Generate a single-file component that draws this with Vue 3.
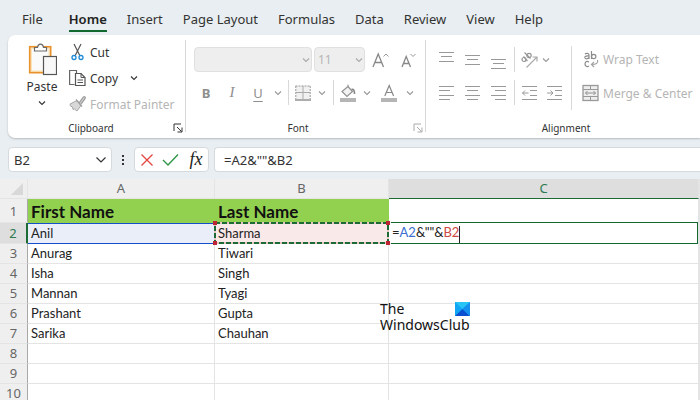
<script setup>
import { h, ref } from 'vue'

const Chevron = () =>
  h('svg', { class: 'chevron', viewBox: '0 0 8 8', width: 8, height: 8, 'aria-hidden': 'true' }, [
    h('path', { d: 'M1 2.5L4 5.5L7 2.5', fill: 'none', stroke: 'currentColor', 'stroke-width': 1.1 }),
  ])

const Launcher = () =>
  h('svg', { class: 'launcher-icon', viewBox: '0 0 10 10', width: 10, height: 10, 'aria-hidden': 'true' }, [
    h('path', { d: 'M1 8V1H8M4 4L8.5 8.5M9 4.5V9H4.5', fill: 'none', stroke: 'currentColor' }),
  ])

const tabs = ['File', 'Home', 'Insert', 'Page Layout', 'Formulas', 'Data', 'Review', 'View', 'Help']

const verticalAlign = [
  { name: 'Top align', path: 'M1 1.5H16M3 5.5H14M1 10.5H16' },
  { name: 'Middle align', path: 'M1 4.5H16M3 8.5H14M1 13.5H16' },
  { name: 'Bottom align', path: 'M1 8.5H16M3 12.5H14M1 17.5H16' },
]
const horizontalAlign = [
  { name: 'Align left', path: 'M1 2.5H16M1 6.5H12M1 11.5H16M1 15.5H12' },
  { name: 'Center', path: 'M1 2.5H16M3 6.5H14M1 11.5H16M3 15.5H14' },
  { name: 'Align right', path: 'M1 2.5H16M5 6.5H16M1 11.5H16M5 15.5H16' },
]

const formula = ref('=A2&""&B2')

const rows = [
  { n: 3, first: 'Anurag', last: 'Tiwari' },
  { n: 4, first: 'Isha', last: 'Singh' },
  { n: 5, first: 'Mannan', last: 'Tyagi' },
  { n: 6, first: 'Prashant', last: 'Gupta' },
  { n: 7, first: 'Sarika', last: 'Chauhan' },
  { n: 8, first: '', last: '' },
  { n: 9, first: '', last: '' },
  { n: 10, first: '', last: '' },
]
</script>

<template>
  <div class="app">
    <nav class="tabs" aria-label="Ribbon tabs">
      <a v-for="t in tabs" :key="t" href="#" class="tab" :class="{ active: t === 'Home', file: t === 'File' }">{{ t }}</a>
    </nav>

    <div class="ribbon">
      <section class="group clipboard">
        <div class="group-body">
          <button class="paste" type="button">
            <svg width="30" height="34" viewBox="0 0 30 34" aria-hidden="true">
              <rect x="2.7" y="4.7" width="21" height="26" fill="#fbe3b5" stroke="#e8912d" stroke-width="1.6" />
              <rect x="5" y="7" width="16.5" height="21.5" fill="#fafafa" />
              <path d="M7.5 9V5.5H10.5C11 1 16 1 16.5 5.5H19.5V9Z" fill="#fff" stroke="#6a6a6a" stroke-width="1.2" />
              <rect x="16.5" y="14.5" width="13" height="18" fill="#f8f8f8" stroke="#555" stroke-width="1.2" />
            </svg>
            <span>Paste</span>
            <Chevron />
          </button>
          <div class="commands">
            <button class="command" type="button">
              <svg width="17" height="18" viewBox="0 0 17 18" aria-hidden="true">
                <path d="M5 1L10.8 12.5M12 1L6.2 12.5" stroke="#555" stroke-width="1.2" fill="none" />
                <circle cx="5" cy="14.5" r="2" fill="none" stroke="#1e8ad6" stroke-width="1.3" />
                <circle cx="12" cy="14.5" r="2" fill="none" stroke="#1e8ad6" stroke-width="1.3" />
              </svg>
              <span>Cut</span>
            </button>
            <button class="command" type="button">
              <svg width="17" height="18" viewBox="0 0 17 18" aria-hidden="true">
                <path d="M5.5 15.5H.6V1.5H7.5V4" fill="none" stroke="#666" stroke-width="1.2" />
                <path d="M6.5 4.5H12L16 8.5V16.5H6.5Z" fill="#fff" stroke="#555" stroke-width="1.2" />
                <path d="M12 4.5V8.5H16M8.5 11H14M8.5 13.5H14" fill="none" stroke="#555" />
              </svg>
              <span>Copy</span>
              <Chevron class="spaced" />
            </button>
            <button class="command" type="button" disabled>
              <svg width="17" height="18" viewBox="0 0 17 18" aria-hidden="true">
                <path d="M1 9L8 5.5L12 10.5L8 16L5.5 14L4 14.5L3.5 12L1.5 11Z" fill="#d8d8d8" stroke="#a8a8a8" />
                <path d="M7 4.5L13 11.5M10.5 7.5L14.5 2C15.5 1 17 2.5 16 3.5L12 9" fill="#e4e4e4" stroke="#a0a0a0" stroke-width="1.3" />
              </svg>
              <span>Format Painter</span>
            </button>
          </div>
        </div>
        <h2 class="group-title">Clipboard</h2>
        <button class="launcher" type="button" aria-label="Clipboard settings"><Launcher /></button>
      </section>

      <section class="group font">
        <div class="tool-rows">
          <div class="tool-row first">
            <div class="combo family">
              <select disabled aria-label="Font"><option></option></select>
              <Chevron />
            </div>
            <div class="combo size">
              <select disabled aria-label="Font size"><option>11</option></select>
              <Chevron />
            </div>
            <button class="tool" type="button" disabled aria-label="Increase font size">
              <svg width="17" height="18" viewBox="0 0 17 18" aria-hidden="true">
                <path d="M1 16L6.2 3L11.5 16M3 11.5H9.5" fill="none" stroke="#888" stroke-width="1.3" />
                <path d="M11.5 5.5L14 3L16.5 5.5" fill="none" stroke="#999" />
              </svg>
            </button>
            <button class="tool" type="button" disabled aria-label="Decrease font size">
              <svg width="17" height="18" viewBox="0 0 17 18" aria-hidden="true">
                <path d="M2 16L6.2 5.5L10.5 16M3.5 12.5H9" fill="none" stroke="#888" stroke-width="1.3" />
                <path d="M10.5 3L13 5.5L15.5 3" fill="none" stroke="#999" />
              </svg>
            </button>
          </div>
          <div class="tool-row">
            <button class="tool letter bold" type="button" disabled>B</button>
            <button class="tool letter italic" type="button" disabled>I</button>
            <button class="tool letter underline" type="button" disabled>U</button>
            <button class="drop small" type="button" disabled aria-label="Underline options"><Chevron /></button>
            <i class="sep"></i>
            <button class="tool narrow" type="button" disabled aria-label="Borders">
              <svg width="16" height="16" viewBox="0 0 16 16" aria-hidden="true">
                <rect x="1" y="1" width="14" height="13" fill="#f1f1f1" />
                <path d="M.5 1H15.5M.8 1V14M15.2 1V14" fill="none" stroke="#999" stroke-dasharray="2 1" />
                <path d="M8 1V14M1 7.5H15" stroke="#aaa" />
                <path d="M0 15H16" stroke="#999" stroke-width="1.6" />
              </svg>
            </button>
            <button class="drop" type="button" disabled aria-label="Border options"><Chevron /></button>
            <i class="sep"></i>
            <button class="tool narrow" type="button" disabled aria-label="Fill colour">
              <svg width="18" height="18" viewBox="0 0 18 18" aria-hidden="true">
                <path d="M8.5 2L13.5 7.5L8 12.5L3 7.5L9 2.5V.8" fill="#f2f2f2" stroke="#909090" stroke-width="1.2" />
                <path d="M12.5 5.5C15 5 15.5 7 15.5 10" fill="none" stroke="#888" stroke-width="1.6" />
                <rect x="1" y="14" width="16" height="4" fill="#b5b5b5" />
              </svg>
            </button>
            <button class="drop" type="button" disabled aria-label="Fill options"><Chevron /></button>
            <button class="tool wide" type="button" disabled aria-label="Font colour">
              <svg width="18" height="18" viewBox="0 0 18 18" aria-hidden="true">
                <path d="M4.8 12L9.2 1.5L13.6 12M6.5 8.5H12" fill="none" stroke="#888" stroke-width="1.2" />
                <rect x="1" y="14" width="16" height="4" fill="#b5b5b5" />
              </svg>
            </button>
            <button class="drop small" type="button" disabled aria-label="Font colour options"><Chevron /></button>
          </div>
        </div>
        <h2 class="group-title">Font</h2>
        <button class="launcher" type="button" disabled aria-label="Font settings"><Launcher /></button>
      </section>

      <section class="group alignment">
        <div class="align-body">
          <div class="tool-rows">
            <div class="tool-row">
              <button v-for="a in verticalAlign" :key="a.name" class="tool" type="button" disabled :aria-label="a.name">
                <svg width="17" height="18" viewBox="0 0 17 18" aria-hidden="true">
                  <path :d="a.path" stroke="#999" />
                </svg>
              </button>
              <i class="sep"></i>
              <button class="tool narrow" type="button" disabled aria-label="Orientation">
                <svg width="18" height="18" viewBox="0 0 18 18" aria-hidden="true">
                  <g fill="none" stroke="#969696" stroke-width="1.2">
                    <circle cx="4" cy="8.5" r="2" />
                    <path d="M3.5 5.5L7.5 10M4.5 1.5L10.5 7.5" />
                    <circle cx="9" cy="4.5" r="2.2" />
                    <path d="M6.5 16.5L16.5 6.5M12.5 6H17V10.5" stroke="#aaa" />
                  </g>
                </svg>
              </button>
              <button class="drop slim" type="button" disabled aria-label="Orientation options"><Chevron /></button>
            </div>
            <div class="tool-row">
              <button v-for="a in horizontalAlign" :key="a.name" class="tool" type="button" disabled :aria-label="a.name">
                <svg width="17" height="18" viewBox="0 0 17 18" aria-hidden="true">
                  <path :d="a.path" stroke="#999" />
                </svg>
              </button>
              <i class="sep"></i>
              <button class="tool narrow" type="button" disabled aria-label="Decrease indent">
                <svg width="17" height="18" viewBox="0 0 17 18" aria-hidden="true">
                  <path d="M1 2.5H16M9 6.5H16M9 11.5H16M1 15.5H16M1.5 9H7.5M4 6.5L1.5 9L4 11.5" fill="none" stroke="#999" />
                </svg>
              </button>
              <button class="tool wide" type="button" disabled aria-label="Increase indent">
                <svg width="17" height="18" viewBox="0 0 17 18" aria-hidden="true">
                  <path d="M1 2.5H16M9 6.5H16M9 11.5H16M1 15.5H16M1 9H7M4.5 6.5L7 9L4.5 11.5" fill="none" stroke="#999" />
                </svg>
              </button>
            </div>
          </div>
          <div class="align-right">
            <button class="command" type="button" disabled>
              <svg width="17" height="18" viewBox="0 0 17 18" aria-hidden="true">
                <g fill="none" stroke="#8c8c8c" stroke-width="1.2">
                  <path d="M3 4C4 3 7 3 7 5V9M7 6C3 5.5 2.5 7 3 8C4 9.5 6.5 8.5 7 7.5" />
                  <path d="M9.5 1V9" />
                  <circle cx="11.7" cy="6.5" r="2.2" />
                  <path d="M7 12C4.5 10.5 3 12 3 14C3 16 5 17.5 7 16" />
                  <path d="M15.5 10C16.5 13.5 14 14.5 9.5 14.5M12 12L9.5 14.5L12 17" stroke="#a0a0a0" />
                </g>
              </svg>
              <span>Wrap Text</span>
            </button>
            <button class="command" type="button" disabled>
              <svg width="17" height="18" viewBox="0 0 17 18" aria-hidden="true">
                <rect x="1" y="1.5" width="15" height="15" fill="#eee" stroke="#999" stroke-width="1.3" />
                <path d="M1 5.5H16M1 12.5H16M8.5 2V5.5M8.5 12.5V16" stroke="#999" />
                <path d="M3.5 9H13.5M5.5 7L3.5 9L5.5 11M11.5 7L13.5 9L11.5 11" fill="none" stroke="#909090" />
              </svg>
              <span>Merge &amp; Center</span>
            </button>
          </div>
        </div>
        <h2 class="group-title">Alignment</h2>
      </section>
    </div>

    <div class="formula-bar">
      <div class="name-box">
        <select aria-label="Name box"><option>B2</option></select>
        <svg width="12" height="8" viewBox="0 0 12 8" aria-hidden="true">
          <path d="M1.5 1.5L6 6L10.5 1.5" fill="none" stroke="#333" stroke-width="1.2" />
        </svg>
      </div>
      <svg class="dots" width="4" height="12" viewBox="0 0 4 12" aria-hidden="true">
        <path d="M1 1H3V3H1ZM1 5H3V7H1ZM1 9H3V11H1Z" fill="#333" />
      </svg>
      <div class="entry">
        <button type="button" aria-label="Cancel">
          <svg width="14" height="14" viewBox="0 0 14 14"><path d="M1.5 1.5L12.5 12.5M12.5 1.5L1.5 12.5" stroke="#e5443e" stroke-width="1.3" /></svg>
        </button>
        <button type="button" aria-label="Enter">
          <svg width="17" height="14" viewBox="0 0 17 14"><path d="M1 7L6 12L16 1.5" fill="none" stroke="#2f9648" stroke-width="1.4" /></svg>
        </button>
        <button type="button" class="fx" aria-label="Insert function">fx</button>
      </div>
      <input v-model="formula" class="formula" type="text" aria-label="Formula" />
    </div>

    <div class="sheet">
      <table>
        <colgroup>
          <col class="col-n" /><col class="col-a" /><col class="col-b" /><col class="col-c" /><col />
        </colgroup>
        <thead>
          <tr>
            <th class="corner"><svg width="14" height="14" viewBox="0 0 14 14" aria-hidden="true"><path d="M13 1V13H1Z" fill="#d8d8d8" /></svg></th>
            <th>A</th>
            <th>B</th>
            <th class="current">C</th>
            <th></th>
          </tr>
        </thead>
        <tbody>
          <tr class="title-row">
            <th>1</th>
            <td class="title">First Name</td>
            <td class="title">Last Name</td>
            <td></td>
            <td></td>
          </tr>
          <tr class="edit-row">
            <th class="current">2</th>
            <td class="ref-a">Anil<i class="frame-a"></i></td>
            <td class="ref-b">Sharma
              <svg class="ants" aria-hidden="true">
                <rect class="ants-base" width="100%" height="100%" />
                <rect class="ants-dash" width="100%" height="100%" />
              </svg>
              <i class="knob tl"></i><i class="knob tr"></i><i class="knob bl"></i><i class="knob br"></i>
            </td>
            <td class="editing">=<span class="blue">A2</span>&amp;""&amp;<span class="red">B2</span><i class="caret"></i><i class="frame-c"></i></td>
            <td></td>
          </tr>
          <tr v-for="r in rows" :key="r.n">
            <th>{{ r.n }}</th>
            <td>{{ r.first }}</td>
            <td>{{ r.last }}</td>
            <td></td>
            <td></td>
          </tr>
        </tbody>
      </table>

      <div class="watermark">
        <div class="watermark-top">
          <span>The</span>
          <svg width="15" height="14" viewBox="0 0 15 14" aria-hidden="true">
            <rect width="15" height="14" fill="#12a5f4" />
            <path d="M0 0H15L7.5 7Z" fill="#27c4f6" />
            <path d="M0 14H15L7.5 7Z" fill="#0a4fd0" />
            <path d="M15 0V14L7.5 7Z" fill="#1590ee" />
          </svg>
        </div>
        <div>WindowsClub</div>
      </div>
    </div>
  </div>
</template>

<style>
body {
  margin: 0;
  background: #e8eef1;
}
</style>

<style scoped>
.app {
  height: 100vh;
  overflow: hidden;
  background: #e8eef1;
  color: #333;
  font-family: "Noto Sans", "Open Sans", sans-serif;
  font-size: 12px;
}
button {
  margin: 0;
  padding: 0;
  border: 0;
  background: none;
  color: inherit;
  font: inherit;
  display: flex;
  align-items: center;
  justify-content: center;
}
svg {
  flex: none;
}
.tabs {
  display: flex;
  gap: 20px;
  padding: 10px 22px 3px;
}
.tab {
  padding-bottom: 2px;
  border-bottom: 2px solid transparent;
  color: #333;
  font-size: 13px;
  line-height: 18px;
  text-decoration: none;
  white-space: nowrap;
}
.tab.file {
  margin-right: 6px;
}
.tab.active {
  border-color: #12692f;
  color: #222;
  font-weight: 600;
}
.ribbon {
  display: flex;
  height: 103px;
  margin-left: 8px;
  border-radius: 7px 0 0 7px;
  background: #fff;
  box-shadow: 0 1px 2px #b4bac0;
}
.group {
  position: relative;
  display: flex;
  flex: none;
  flex-direction: column;
  box-sizing: border-box;
  padding-top: 4px;
}
.group:not(:last-child)::after {
  content: "";
  position: absolute;
  top: 5px;
  right: 0;
  bottom: 6px;
  width: 1px;
  background: #d8d8d8;
}
.clipboard {
  width: 178px;
}
.font {
  width: 240px;
}
.alignment {
  flex: 1;
  min-width: 0;
}
.group-title {
  margin: auto 0 2px;
  font-size: 10px;
  font-weight: 400;
  line-height: 16px;
  text-align: center;
}
.clipboard .group-title {
  padding-right: 12px;
}
.font .group-title {
  padding-right: 16px;
}
.alignment .group-title {
  width: 280px;
}
.launcher {
  position: absolute;
  right: 3px;
  bottom: 5px;
}
.launcher:disabled {
  color: #aaa;
}
.group-body {
  display: flex;
  gap: 9px;
  padding-left: 16px;
}
.paste {
  flex-direction: column;
  justify-content: flex-start;
  width: 36px;
  padding-top: 3px;
  line-height: 22px;
}
.paste .chevron {
  margin-top: 1px;
}
.commands {
  display: flex;
  flex-direction: column;
}
.command {
  justify-content: flex-start;
  gap: 4px;
  height: 26px;
  white-space: nowrap;
}
.command:disabled {
  color: #b5b5b5;
}
.spaced {
  margin-left: 8px;
}
.tool-rows {
  padding-top: 4px;
}
.tool-row {
  display: flex;
  align-items: center;
  height: 33px;
  padding-left: 7px;
}
.tool-row.first {
  padding-left: 8px;
  gap: 2px;
}
.combo {
  position: relative;
  display: flex;
  align-items: center;
  height: 25px;
}
.combo.family {
  width: 118px;
}
.combo.size {
  width: 51px;
}
.combo .chevron {
  position: absolute;
  right: 2px;
  color: #aaa;
}
.combo select {
  appearance: none;
  width: 100%;
  height: 100%;
  padding: 0 3px;
  border: 1px solid #e0e0e0;
  border-radius: 4px;
  background: #eee;
  color: #b5b5b5;
  font: inherit;
  opacity: 1;
}
.tool {
  width: 26px;
  height: 25px;
  color: #8e8e8e;
}
.tool.narrow {
  width: 22px;
}
.tool.wide {
  width: 28px;
}
.letter {
  font-size: 13px;
}
.bold {
  font-weight: 700;
}
.italic {
  font-family: "Liberation Serif", serif;
  font-size: 15px;
  font-style: italic;
}
.underline {
  text-decoration: underline;
  text-underline-offset: 3px;
}
.drop {
  width: 16px;
  height: 25px;
  color: #999;
}
.drop.small {
  width: 14px;
}
.drop.slim {
  width: 12px;
}
.sep {
  width: 1px;
  height: 25px;
  margin: 0 3px;
  background: #d8d8d8;
}
.align-body {
  display: flex;
}
.align-right {
  display: flex;
  flex-direction: column;
  gap: 8px;
  height: 64px;
  margin: 7px 0 0 3px;
  padding-left: 10px;
  border-left: 1px solid #d8d8d8;
}
.formula-bar {
  display: flex;
  align-items: center;
  gap: 5px;
  height: 25px;
  padding: 9px 0 7px 8px;
}
.name-box,
.entry,
.formula {
  box-sizing: border-box;
  height: 25px;
  border: 1px solid #d6dadd;
  border-radius: 4px;
  background: #fff;
}
.name-box {
  position: relative;
  display: flex;
  align-items: center;
  width: 104px;
}
.name-box select {
  appearance: none;
  width: 100%;
  height: 100%;
  padding: 0 5px;
  border: 0;
  background: transparent;
  color: #333;
  font: inherit;
  font-size: 13px;
}
.name-box svg {
  position: absolute;
  right: 4px;
}
.dots {
  margin: 0 4px;
}
.entry {
  display: flex;
  align-items: center;
  gap: 8px;
  width: 75px;
  padding-left: 5px;
}
.fx {
  width: 18px;
  color: #222;
  font-family: "Liberation Serif", serif;
  font-size: 18px;
  font-style: italic;
}
.formula {
  flex: 1;
  min-width: 0;
  padding: 0 9px;
  border-right: 0;
  border-radius: 4px 0 0 4px;
  color: #333;
  font: inherit;
  font-size: 13px;
}
.sheet {
  position: relative;
  background: #fff;
}
table {
  width: 100%;
  table-layout: fixed;
  border-collapse: separate;
  border-spacing: 0;
}
.col-n {
  width: 28px;
}
.col-a {
  width: 187px;
}
.col-b {
  width: 174px;
}
.col-c {
  width: 310px;
}
th,
td {
  position: relative;
  box-sizing: border-box;
  height: 20px;
  padding: 0 3px;
  border-right: 1px solid #e4e4e4;
  border-bottom: 1px solid #e4e4e4;
  line-height: 19px;
  white-space: nowrap;
}
td {
  color: #222;
  font-family: Lato, "Noto Sans", sans-serif;
  font-size: 13px;
}
th {
  background: #efefef;
  color: #666;
  font-size: 13px;
  font-weight: 400;
  text-align: center;
}
tbody th {
  padding: 0;
  border-right-color: #a8a8a8;
}
thead th.current {
  border-bottom: 1px solid #1c6b35;
  background: #dedede;
  color: #2c7a50;
}
tbody th.current {
  border-right: 2px solid #1c6b35;
  background: #dedede;
  color: #2c7a50;
}
.corner svg {
  display: block;
  margin-left: auto;
}
.title-row th,
.title-row td {
  height: 24px;
  padding-top: 2px;
}
td.title {
  border-color: #92d050;
  background: #92d050;
  color: #111;
  font-size: 17px;
  font-weight: 700;
}
.edit-row th,
.edit-row td {
  height: 21px;
}
.ref-a {
  background: #e9eef9;
}
.ref-b {
  background: #f9e9e9;
}
.frame-a {
  position: absolute;
  inset: 0 0 -1px 0;
  border: solid #1450c8;
  border-width: 1px 0;
}
.ants {
  position: absolute;
  top: 0;
  left: 0;
  width: 100%;
  height: 100%;
  overflow: visible;
}
.ants rect {
  fill: none;
  stroke-width: 2px;
}
.ants-base {
  stroke: #e9c4c4;
}
.ants-dash {
  stroke: #1c6b35;
  stroke-dasharray: 5 2;
}
.knob {
  position: absolute;
  z-index: 1;
  width: 4px;
  height: 4px;
  background: #bd2434;
}
.tl {
  top: -2px;
  left: -2px;
}
.tr {
  top: -2px;
  right: -2px;
}
.bl {
  bottom: -2px;
  left: -2px;
}
.br {
  right: -2px;
  bottom: -2px;
}
.editing {
  font-size: 13px;
}
.frame-c {
  position: absolute;
  inset: -1px 0 -1px 2px;
  border: 1px solid #12692f;
  border-left: 0;
}
.blue {
  color: #3b6fd0;
}
.red {
  color: #cc4a44;
}
.caret {
  display: inline-block;
  width: 1px;
  height: 17px;
  background: #222;
  vertical-align: middle;
}
.watermark {
  position: absolute;
  top: 122px;
  left: 380px;
  color: #111;
  font-size: 14px;
  line-height: 16px;
}
.watermark-top {
  display: flex;
  align-items: center;
  justify-content: space-between;
}
</style>
